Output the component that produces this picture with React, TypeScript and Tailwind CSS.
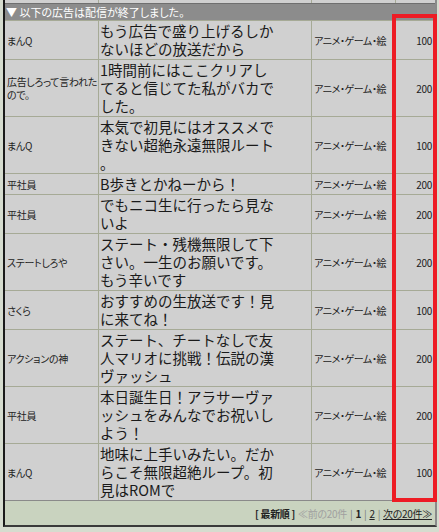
const rows = [
  { name: ["まんQ"], lines: ["もう広告で盛り上げるしか", "ないほどの放送だから"], pt: "100" },
  { name: ["広告しろって言われた", "ので。"], lines: ["1時間前にはここクリアし", "てると信じてた私がバカで", "した。"], pt: "200" },
  { name: ["まんQ"], lines: ["本気で初見にはオススメで", "きない超絶永遠無限ルート", "。"], pt: "100" },
  { name: ["平社員"], lines: ["B歩きとかねーから！"], pt: "200" },
  { name: ["平社員"], lines: ["でもニコ生に行ったら見な", "いよ"], pt: "200" },
  { name: ["ステートしろや"], lines: ["ステート・残機無限して下", "さい。一生のお願いです。", "もう辛いです"], pt: "200" },
  { name: ["さくら"], lines: ["おすすめの生放送です！見", "に来てね！"], pt: "100" },
  { name: ["アクションの神"], lines: ["ステート、チートなしで友", "人マリオに挑戦！伝説の漢", "ヴァッシュ"], pt: "200" },
  { name: ["平社員"], lines: ["本日誕生日！アラサーヴァ", "ッシュをみんなでお祝いし", "よう！"], pt: "200" },
  { name: ["まんQ"], lines: ["地味に上手いみたい。だか", "らこそ無限超絶ループ。初", "見はROMで"], pt: "100" },
];

const cols = "grid grid-cols-[94px_213px_84px_39px]";

export default function App() {
  return (
    <div className="relative h-[532px] w-[439px] overflow-hidden bg-[#d6dccf] font-['Noto_Sans_CJK_JP',sans-serif] text-[#1a1a1a]">
      <div className="ml-[3px] w-[434px] border-b-2 border-l-2 border-r-2 border-b-[#3a3a3a] border-l-[#1a1a1a] border-r-[#8a8a8a]">
        {/* tail of the previous row */}
        <div className={`${cols} h-[3px] bg-[#d0d0d0]`}>
          <div className="border-r border-[#a6aa96]" />
          <div className="border-r border-[#a6aa96]" />
          <div className="border-r border-[#a6aa96]" />
          <div />
        </div>
        <div className="flex h-[17px] items-center border-t border-[#6f6f6f] bg-[#8c8c8c] pl-[1px] text-[11px] leading-none text-white [font-feature-settings:'palt']">
          ▼ 以下の広告は配信が終了しました。
        </div>
        <div className="bg-[#d0d0d0]">
          {rows.map((r, i) => (
            <div key={i} className={`${cols} border-t border-[#a6aa96]`}>
              <div className="flex flex-col justify-center border-r border-[#a6aa96] pl-[2px] text-[10px] leading-[13px] tracking-[-0.3px] text-[#222] [font-feature-settings:'palt']">
                {r.name.map((n) => (
                  <span key={n}>{n}</span>
                ))}
              </div>
              <div className="flex flex-col justify-center border-r border-[#a6aa96] px-[1px] py-[1px] text-[14.5px] leading-[18px] whitespace-nowrap">
                {r.lines.map((l, j) => (
                  <span key={j} className="h-[18px]">
                    {l}
                  </span>
                ))}
              </div>
              <div className="flex items-center border-r border-[#a6aa96] pl-[2px] text-[10px] tracking-[-0.4px] text-[#222] [font-feature-settings:'palt']">
                アニメ・ゲーム・絵
              </div>
              <div className="flex items-center justify-end pr-[3px] text-[10px] tracking-[-0.3px] text-[#222]">
                {r.pt}
              </div>
            </div>
          ))}
        </div>
        <div className="flex h-[25px] items-center justify-end gap-[3px] border-t border-[#8a8a8a] bg-[#c9d3bf] pr-[3px] text-[10px] tracking-[-0.3px] text-[#222] [font-feature-settings:'palt']">
          <span className="font-bold">[ 最新順 ]</span>
          <span className="text-[#a0a0a0]">≪前の20件</span>
          <span className="text-[#777]">|</span>
          <span className="font-bold">1</span>
          <span className="text-[#777]">|</span>
          <span className="underline">2</span>
          <span className="text-[#777]">|</span>
          <span className="underline">次の20件≫</span>
        </div>
      </div>
      {/* red highlight drawn over the points column */}
      <div className="absolute left-[392px] top-[14px] h-[488px] w-[45px] border-4 border-[#ed1c24]" />
    </div>
  );
}
